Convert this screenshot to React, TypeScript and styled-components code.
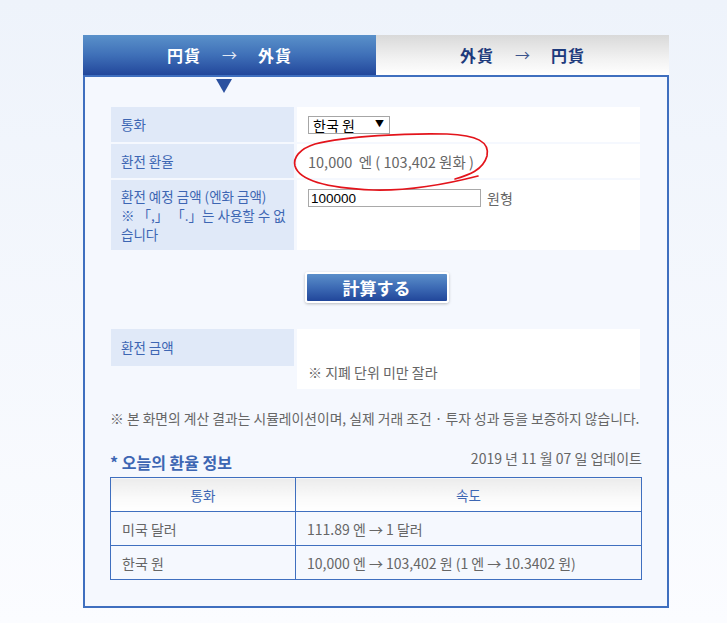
import React, { useState } from 'react';
import styled, { createGlobalStyle } from 'styled-components';

const GlobalStyle = createGlobalStyle`
  html, body {
    margin: 0;
    padding: 0;
  }
  body {
    min-height: 623px;
    background: linear-gradient(180deg, #eef3fb 0%, #fbfcff 100%);
    font-family: "Noto Sans CJK KR", "Noto Sans", sans-serif;
    font-size: 13.5px;
    color: #555;
  }
`;

const rates = [
  { currency: '미국 달러', rate: '111.89 엔 → 1 달러' },
  { currency: '한국 원', rate: '10,000 엔 → 103,402 원 (1 엔 → 10.3402 원)' },
];

export default function App() {
  const [amount, setAmount] = useState('100000');
  const [currency, setCurrency] = useState('KRW');

  return (
    <>
      <GlobalStyle />
      <Wrapper>
        <Tabs>
          <Tab active>円貨<TabArrow>→</TabArrow>外貨</Tab>
          <Tab>外貨<TabArrow>→</TabArrow>円貨</Tab>
        </Tabs>
        <Panel>
          <Pointer />
          <FormGrid>
            <LabelCell>통화</LabelCell>
            <ValueCell>
              <SelectWrap>
                <Select value={currency} onChange={e => setCurrency(e.target.value)}>
                  <option value="KRW">한국 원</option>
                  <option value="USD">미국 달러</option>
                </Select>
                <SelectCaret>▼</SelectCaret>
              </SelectWrap>
            </ValueCell>

            <LabelCell center>환전 환율</LabelCell>
            <ValueCell center>
              <RateText>10,000&nbsp; 엔 ( 103,402 원화 )</RateText>
              {/* hand-drawn red circle marking the rate */}
              <Scribble viewBox="0 0 1 1" aria-hidden>
                <path d="M 158 35 C 172 31, 186 26, 190 12 C 193 -2, 180 -9, 150 -10 C 110 -11, 50 -8, 18 0 C 2 5, -4 14, -2 22 C 2 36, 30 44, 76 46 C 115 47, 150 40, 181 32" />
              </Scribble>
            </ValueCell>

            <LabelCell tall>
              환전 예정 금액 (엔화 금액)<br />
              ※ 「,」 「.」는 사용할 수 없<br />
              습니다
            </LabelCell>
            <ValueCell>
              <AmountRow>
                <AmountInput value={amount} onChange={e => setAmount(e.target.value)} />
                <Unit>원형</Unit>
              </AmountRow>
            </ValueCell>
          </FormGrid>

          <ButtonRow>
            <CalcButton type="button">計算する</CalcButton>
          </ButtonRow>

          <ResultGrid>
            <ResultLabel>환전 금액</ResultLabel>
            <ResultValue>※ 지폐 단위 미만 잘라</ResultValue>
          </ResultGrid>

          <Notice>※ 본 화면의 계산 결과는 시뮬레이션이며, 실제 거래 조건 · 투자 성과 등을 보증하지 않습니다.</Notice>

          <InfoHeader>
            <InfoTitle>* 오늘의 환율 정보</InfoTitle>
            <Updated>2019 년 11 월 07 일 업데이트</Updated>
          </InfoHeader>

          <RateTable>
            <thead>
              <tr>
                <Th style={{ width: 184 }}>통화</Th>
                <Th>속도</Th>
              </tr>
            </thead>
            <tbody>
              {rates.map(r => (
                <tr key={r.currency}>
                  <Td>{r.currency}</Td>
                  <Td>{r.rate}</Td>
                </tr>
              ))}
            </tbody>
          </RateTable>
        </Panel>
      </Wrapper>
    </>
  );
}

const Wrapper = styled.div`
  width: 586px;
  margin: 0 0 0 83px;
  padding-top: 35px;
`;

const Tabs = styled.div`
  display: grid;
  grid-template-columns: 293px 293px;
  height: 40px;
`;

const Tab = styled.div<{ active?: boolean }>`
  display: flex;
  align-items: center;
  justify-content: center;
  font-family: "Noto Sans CJK JP", "Noto Sans", sans-serif;
  font-size: 16px;
  font-weight: 700;
  letter-spacing: 1px;
  padding-bottom: 1px;
  color: ${p => (p.active ? '#ffffff' : '#1d3a7c')};
  background: ${p =>
    p.active
      ? 'linear-gradient(180deg, #5a91ca 0%, #3f70b8 50%, #22479b 100%)'
      : 'linear-gradient(180deg, #d9d9d9 0%, #f2f2f2 60%, #ffffff 100%)'};
`;

const TabArrow = styled.span`
  font-weight: 400;
  font-size: 15px;
  margin: 0 20px 0 21px;
  opacity: 0.85;
`;

const Panel = styled.div`
  border: 2px solid #3f6fbf;
  background: #f5f8fe;
  padding: 0 27px 26px 26px;
`;

const Pointer = styled.div`
  width: 0;
  height: 0;
  margin: 2px 0 0 105px;
  border-left: 8px solid transparent;
  border-right: 8px solid transparent;
  border-top: 14px solid #2a509f;
`;

const FormGrid = styled.div`
  display: grid;
  grid-template-columns: 183px 343px;
  grid-template-rows: 35px 34px 70px;
  gap: 2px 3px;
  margin-top: 14px;
`;

const LabelCell = styled.div<{ center?: boolean; tall?: boolean }>`
  background: #e0e9f8;
  color: #3d66b3;
  font-size: 13.5px;
  line-height: ${p => (p.tall ? '19px' : '22px')};
  padding: ${p => (p.center ? '0 10px' : p.tall ? '7px 10px 0' : '6px 10px 0')};
  align-items: ${p => (p.center ? 'center' : 'flex-start')};
  display: ${p => (p.tall ? 'block' : 'flex')};
  white-space: nowrap;
`;

const ValueCell = styled.div<{ center?: boolean }>`
  position: relative;
  background: #ffffff;
  padding: ${p => (p.center ? '0 11px' : '8px 11px 0')};
  display: flex;
  align-items: ${p => (p.center ? 'center' : 'flex-start')};
`;

const SelectWrap = styled.div`
  position: relative;
  width: 82px;
  height: 18px;
`;

const Select = styled.select`
  appearance: none;
  width: 100%;
  height: 100%;
  border: 1px solid #a6a6a6;
  border-radius: 0;
  background: #ffffff;
  color: #000;
  font-family: "Noto Sans CJK KR", sans-serif;
  font-size: 14px;
  padding: 0 4px;
  line-height: 16px;
`;

const SelectCaret = styled.span`
  position: absolute;
  right: 6px;
  top: 1px;
  font-size: 9px;
  color: #000;
  pointer-events: none;
  line-height: 16px;
`;

const RateText = styled.span`
  color: #666;
  font-size: 14.5px;
`;

const Scribble = styled.svg`
  position: absolute;
  left: 0;
  top: 0;
  z-index: 2;
  width: 1px;
  height: 1px;
  overflow: visible;
  pointer-events: none;

  path {
    fill: none;
    stroke: #e3141b;
    stroke-width: 1.7;
    stroke-linecap: round;
  }
`;

const AmountRow = styled.div`
  display: flex;
  align-items: center;
  gap: 6px;
`;

const AmountInput = styled.input`
  width: 173px;
  height: 18px;
  box-sizing: border-box;
  border: 1px solid #a9a9a9;
  padding: 0 2px;
  font-family: "Liberation Sans", sans-serif;
  font-size: 13.5px;
  color: #000;
`;

const Unit = styled.span`
  color: #666;
  font-size: 14px;
`;

const ButtonRow = styled.div`
  display: flex;
  justify-content: center;
  margin: 22px 0 26px;
  padding-left: 2px;
`;

const CalcButton = styled.button`
  width: 144px;
  height: 31px;
  border: 2px solid #ffffff;
  border-radius: 3px;
  box-shadow: 0 1px 3px rgba(0, 0, 0, 0.25);
  background: linear-gradient(180deg, #5b8fca 0%, #3d6bb5 50%, #21469a 100%);
  color: #ffffff;
  font-family: "Noto Sans CJK JP", sans-serif;
  font-size: 17px;
  font-weight: 700;
  cursor: pointer;
`;

const ResultGrid = styled.div`
  display: grid;
  grid-template-columns: 183px 343px;
  column-gap: 3px;
  align-items: start;
`;

const ResultLabel = styled.div`
  background: #e0e9f8;
  color: #3d66b3;
  height: 37px;
  box-sizing: border-box;
  padding: 8px 10px 0;
`;

const ResultValue = styled.div`
  background: #ffffff;
  height: 60px;
  box-sizing: border-box;
  padding: 33px 11px 0;
  color: #666;
  font-size: 14px;
`;

const Notice = styled.p`
  margin: 20px 0 0 -1px;
  color: #666;
  font-size: 13.8px;
  line-height: 18px;
  white-space: nowrap;
`;

const InfoHeader = styled.div`
  display: flex;
  justify-content: space-between;
  align-items: flex-end;
  margin: 21px -2px 0 -1px;
`;

const InfoTitle = styled.h3`
  margin: 0;
  font-size: 16px;
  font-weight: 700;
  color: #3d66b3;
  line-height: 20px;
`;

const Updated = styled.span`
  color: #666;
  font-size: 14px;
  line-height: 20px;
  margin-bottom: 4px;
`;

const RateTable = styled.table`
  width: 532px;
  margin: 5px 0 0 -1px;
  border-collapse: collapse;
  font-size: 14px;
`;

const Th = styled.th`
  height: 33px;
  padding: 0;
  line-height: 18px;
  border: 1px solid #3f6fbf;
  background: linear-gradient(180deg, #ececec 0%, #fafafa 60%, #ffffff 100%);
  color: #3d66b3;
  font-weight: 400;
  font-size: 13.5px;
  text-align: center;
`;

const Td = styled.td`
  height: 33px;
  line-height: 18px;
  border: 1px solid #3f6fbf;
  padding: 0 11px;
  color: #666;
`;
